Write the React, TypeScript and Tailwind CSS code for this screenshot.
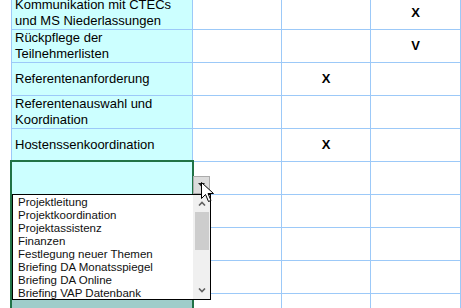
import React from 'react';

const rows = [
  { label: ['Kommunikation mit CTECs', 'und MS Niederlassungen'], d: '', e: 'X' },
  { label: ['Rückpflege der', 'Teilnehmerlisten'], d: '', e: 'V' },
  { label: ['Referentenanforderung'], d: 'X', e: '' },
  { label: ['Referentenauswahl und', 'Koordination'], d: '', e: '' },
  { label: ['Hostenssenkoordination'], d: 'X', e: '' },
  { label: [], d: '', e: '' },
  { label: [], d: '', e: '' },
  { label: [], d: '', e: '' },
  { label: [], d: '', e: '' },
  { label: [], d: '', e: '' },
];

const options = [
  'Projektleitung',
  'Projektkoordination',
  'Projektassistenz',
  'Finanzen',
  'Festlegung neuer Themen',
  'Briefing DA Monatsspiegel',
  'Briefing DA Online',
  'Briefing VAP Datenbank',
];

export default function App() {
  return (
    <div className="relative w-[461px] h-[308px] overflow-hidden bg-white font-['Liberation_Sans',Arial,sans-serif] text-[13px] text-black">
      {/* sheet grid */}
      <div className="flex -mt-[3px]">
        <div className="w-[11px] shrink-0 bg-white" />
        <div className="grid grid-cols-[180px_88px_88px_89px_40px] auto-rows-[32px] gap-px bg-[#9cc9f8] pl-px">
          {rows.map((r, i) => (
            <React.Fragment key={i}>
              <div
                className={`flex flex-col justify-center pl-[3px] leading-[16px] whitespace-nowrap ${
                  i > 5 ? 'bg-[#9fcdca]' : 'bg-[#ccffff]'
                }`}
              >
                {r.label.map((l) => (
                  <span key={l}>{l}</span>
                ))}
              </div>
              <div className="bg-white" />
              <div className="flex items-center justify-center bg-white font-bold">{r.d}</div>
              <div className="flex items-center justify-center bg-white font-bold">{r.e}</div>
              <div className="bg-white" />
            </React.Fragment>
          ))}
        </div>
      </div>

      {/* active cell selection */}
      <div className="absolute left-[10px] top-[160px] w-[184px] h-[200px] border-2 border-[#217346]" />

      {/* validation dropdown button */}
      <div className="absolute left-[193px] top-[176px] w-[17px] h-[18px] bg-[#dcdcdc] border border-[#ababab] flex items-center justify-center">
        <svg width="7" height="4" viewBox="0 0 7 4">
          <path d="M0 0 L7 0 L3.5 4 Z" fill="#222" />
        </svg>
      </div>

      {/* dropdown list */}
      <div className="absolute left-[12px] top-[194px] w-[199px] h-[106px] bg-white border border-black flex font-['Liberation_Sans',Arial,sans-serif] text-[11.5px] leading-[13px] text-[#111]">
        <div className="flex-1 flex flex-col pl-[5px] pt-px">
          {options.map((o) => (
            <span key={o} className="whitespace-nowrap">
              {o}
            </span>
          ))}
        </div>
        <div className="w-[17px] bg-[#f0f0f0] flex flex-col items-center">
          <div className="h-[17px] flex items-center justify-center">
            <svg width="8" height="5" viewBox="0 0 8 5">
              <path d="M1 4.5 L4 1.5 L7 4.5" stroke="#606060" strokeWidth="1.6" fill="none" />
            </svg>
          </div>
          <div className="w-[14px] h-[38px] bg-[#cdcdcd]" />
          <div className="flex-1" />
          <div className="h-[17px] flex items-center justify-center">
            <svg width="8" height="5" viewBox="0 0 8 5">
              <path d="M1 0.5 L4 3.5 L7 0.5" stroke="#606060" strokeWidth="1.6" fill="none" />
            </svg>
          </div>
        </div>
      </div>

      {/* mouse cursor */}
      <svg className="absolute left-[201px] top-[182px]" width="14" height="22" viewBox="0 0 14 22">
        <path
          d="M0.5 0.5 L0.5 16.5 L4.5 12.5 L7.5 19.5 L10 18.5 L7 11.5 L12.5 11.5 Z"
          fill="#fff"
          stroke="#000"
          strokeWidth="1"
          strokeLinejoin="round"
        />
      </svg>
    </div>
  );
}
